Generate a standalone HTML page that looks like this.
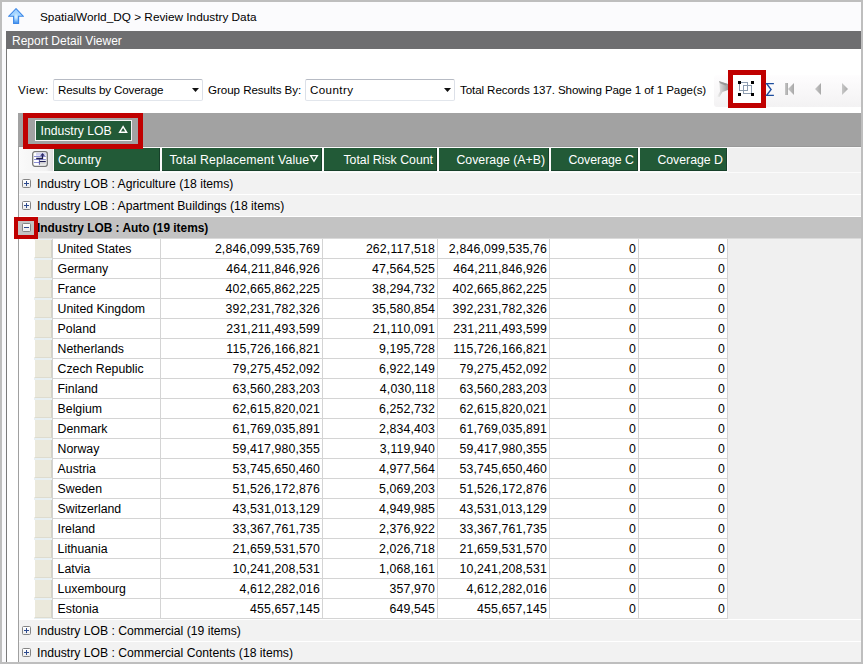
<!DOCTYPE html>
<html><head><meta charset="utf-8"><style>
*{margin:0;padding:0;box-sizing:content-box}
html,body{width:863px;height:664px;overflow:hidden;background:#fff;font-family:"Liberation Sans",sans-serif;font-size:12px;color:#000}
.a{position:absolute}
#frame{position:absolute;left:0;top:0;width:859px;height:660px;border:2px solid #bebebe;background:#fff}
#topbar{position:absolute;left:2px;top:2px;width:859px;height:29px;background:#fbfbfd}
#crumb{position:absolute;left:40px;top:10px;font-size:11.8px;line-height:14px;color:#000;white-space:nowrap}
#title{position:absolute;left:6px;top:31px;width:855px;height:18px;background:#6e6e70;color:#fff}
#title span{position:absolute;left:6px;top:2.5px;font-size:12px;line-height:14px;white-space:nowrap}
#vline{position:absolute;left:6px;top:49px;width:1px;height:613px;background:#7a7a7a}
.lbl{position:absolute;font-size:11.6px;white-space:nowrap;line-height:14px;color:#000}
.dd{position:absolute;top:79px;width:148px;height:20px;border:1px solid;border-color:#b7bbc4 #dce0e8 #e2e6ec #dce0e8;border-radius:2px;background:#fff}
.dd span{position:absolute;left:4px;top:3px;font-size:11.6px;line-height:14px;color:#000;white-space:nowrap}
.dd i{position:absolute;top:9px;width:0;height:0;border-left:3.5px solid transparent;border-right:3.5px solid transparent;border-top:4px solid #111}
#tb{position:absolute;left:714px;top:75px;width:147px;height:32px;background:linear-gradient(#fefdfe,#f3f2f3);border-radius:3px 0 0 3px}
.red{position:absolute;border:5px solid #c00000}
#gp{position:absolute;left:18px;top:113px;width:843px;height:34px;background:#a2a2a2;box-shadow:inset 0 -1px 0 #999}
#grid{position:absolute;left:18px;top:147px;width:843px;height:515px;background:#f0f0f0;border-left:1px solid #a0a0a0;box-sizing:border-box}
.hd{position:absolute;top:148px;height:22px;background:#225a37;border-right:1px solid #17402a;border-bottom:1px solid #17402a;color:#fff;line-height:24px;font-size:12.3px;white-space:nowrap;box-sizing:content-box}
.grp{position:absolute;left:19px;width:842px;height:21px;background:#f2f2f2;border-bottom:1px solid #fff}
.grp span{position:absolute;left:18px;top:0;line-height:23px;font-size:12.2px;white-space:nowrap;color:#000}
.pm{position:absolute;left:3px;top:6px;width:7px;height:7px;border:1px solid #858585;border-radius:1.5px;background:linear-gradient(#fff,#ececec)}
.c{position:absolute;height:19px;line-height:21px;font-size:12.3px;background:#fff;border-right:1px solid #d4d4d4;border-bottom:1px solid #d4d4d4;white-space:nowrap;overflow:hidden}
.tl{text-align:left}
.tl{padding-left:4.6px;width:102.4px!important;font-size:12.3px}
.tr{text-align:right;letter-spacing:0.15px;padding-right:2px}
.ind{position:absolute;left:34px;width:16px;border-left:1px solid #fff;height:17px;background:#ebe9dc;border-bottom:1px solid #dedccf;border-right:1px solid #d3d2c8}
.ph{position:absolute;left:1px;top:3px;width:5px;height:1px;background:#2d4a8e}
.pv{position:absolute;left:3px;top:1px;width:1px;height:5px;background:#2d4a8e}

</style></head><body>
<div id="frame"></div>
<div id="topbar"></div>
<svg class="a" style="left:8px;top:8px" width="16" height="16" viewBox="0 0 16 16">
<defs><linearGradient id="ag" x1="0" y1="0" x2="0" y2="1"><stop offset="0" stop-color="#9fd0ff"/><stop offset="0.5" stop-color="#a8d8ff"/><stop offset="1" stop-color="#4b98f0"/></linearGradient>
<radialGradient id="ah" cx="0.5" cy="0.45" r="0.5"><stop offset="0" stop-color="#f0faff" stop-opacity="0.95"/><stop offset="1" stop-color="#c0e4ff" stop-opacity="0"/></radialGradient></defs>
<path d="M8 0.7 L15.4 8.3 L10.6 8.3 L10.6 15.4 L5.6 15.4 L5.6 8.3 L0.6 8.3 Z" fill="url(#ag)" stroke="#3d88e8" stroke-width="1.1" stroke-linejoin="miter"/>
<ellipse cx="8" cy="9.5" rx="2.2" ry="5" fill="url(#ah)"/>
</svg>
<div id="crumb">SpatialWorld_DQ &gt; Review Industry Data</div>
<div id="title"><span>Report Detail Viewer</span></div>
<div class="a" style="left:2px;top:49px;width:4px;height:613px;background:#fafafc"></div>
<div id="vline"></div>
<div class="lbl" style="left:18px;top:83px;letter-spacing:0.5px">View:</div>
<div class="dd" style="left:53px"><span style="letter-spacing:-0.12px">Results by Coverage</span><svg class="a" style="left:137.5px;top:8px" width="7" height="4" viewBox="0 0 7 4"><path d="M0 0 H7 L3.5 4 Z" fill="#111"/></svg></div>
<div class="lbl" style="left:208px;top:83px;letter-spacing:-0.05px">Group Results By:</div>
<div class="dd" style="left:305px"><span style="letter-spacing:0.4px">Country</span><svg class="a" style="left:137.5px;top:8px" width="7" height="4" viewBox="0 0 7 4"><path d="M0 0 H7 L3.5 4 Z" fill="#111"/></svg></div>
<div class="lbl" style="left:460px;top:83px;letter-spacing:-0.1px">Total Records 137. Showing Page 1 of 1 Page(s)</div>
<div id="tb"></div>
<!-- filter funnel -->
<svg class="a" style="left:712px;top:76px" width="20" height="24" viewBox="0 0 20 24">
<defs><linearGradient id="fg" x1="0" y1="0" x2="1" y2="0"><stop offset="0" stop-color="#f4f4f4"/><stop offset="0.35" stop-color="#d2d2d2"/><stop offset="1" stop-color="#9c9c9c"/></linearGradient></defs>
<path d="M6.9 5 L16 8 L16 14 L10.5 16 L7.4 21 L5 20.6 L8 15.5 L7.4 7.5 Z" fill="url(#fg)"/>
<path d="M6.9 5 L15.5 8 L13.5 9.6 L8 7.2 Z" fill="#8e8e8e" opacity="0.8"/>
</svg>
<div class="red" style="left:728px;top:70px;width:28px;height:28px;background:#fff"></div>
<svg class="a" style="left:737px;top:80px" width="18" height="18" viewBox="0 0 18 18">
<rect x="2.5" y="2.5" width="8" height="8" fill="none" stroke="#8e9db0" stroke-width="1"/>
<rect x="6.5" y="5.5" width="8" height="8" fill="none" stroke="#8e9db0" stroke-width="1"/>
<rect x="1" y="1" width="3" height="3" fill="#000"/>
<rect x="14" y="1" width="3" height="3" fill="#000"/>
<rect x="1" y="13" width="3" height="3" fill="#000"/>
<rect x="14" y="13" width="3" height="3" fill="#000"/>
</svg>
<svg class="a" style="left:765px;top:82px" width="11" height="15" viewBox="0 0 11 15">
<path d="M8.9 1.6 L1.6 1.6 L6.1 7.5 L1.6 13.4 L8.9 13.4" fill="none" stroke="#1d4d9e" stroke-width="1.35"/>
</svg>
<svg class="a" style="left:784px;top:82px" width="12" height="14" viewBox="0 0 12 14">
<defs><linearGradient id="ng" x1="0" y1="0" x2="1" y2="0"><stop offset="0" stop-color="#c8c8c8"/><stop offset="1" stop-color="#a8a8a8"/></linearGradient></defs>
<rect x="1" y="1" width="3" height="12" fill="url(#ng)"/>
<path d="M10 1 L4 7 L10 13 Z" fill="url(#ng)"/>
</svg>
<svg class="a" style="left:814px;top:82px" width="8" height="14" viewBox="0 0 8 14">
<path d="M7 1 L1 7 L7 13 Z" fill="url(#ng)"/>
</svg>
<svg class="a" style="left:841px;top:82px" width="8" height="14" viewBox="0 0 8 14">
<path d="M1 1 L7 7 L1 13 Z" fill="url(#ng)"/>
</svg>
<div id="gp"></div>
<div id="grid"></div>
<div class="a" style="left:19px;top:147px;width:842px;height:1px;background:#fafafa"></div>
<div class="a" style="left:19px;top:148px;width:842px;height:24px;background:#f0f0f0"></div>
<div class="a" style="left:19px;top:148px;width:709px;height:24px;background:#fafafa"></div>
<div class="a" style="left:19px;top:172px;width:842px;height:1px;background:#fbfbfb"></div>
<!-- header indicator cell -->
<div class="a" style="left:19px;top:148px;width:34px;height:23px;background:linear-gradient(90deg,#fafafa,#f2f2f2 80%,#dedede)"></div>
<svg class="a" style="left:32px;top:151px" width="16" height="16" viewBox="0 0 16 16">
<rect x="0.7" y="0.7" width="14.6" height="14.6" rx="2.2" fill="#fff" stroke="#767676" stroke-width="1.3"/>
<rect x="4" y="1.8" width="9.8" height="2.9" fill="#d4d4f0"/>
<path d="M2 5.5 H13.8 M2 8.5 H13.8 M2 11.5 H7" stroke="#8d8fd6" stroke-width="1"/>
<rect x="8" y="11.2" width="5.8" height="2.4" fill="#d9d9d9"/>
<path d="M7.4 8 V13.8" stroke="#5555a5" stroke-width="1"/>
<path d="M4.2 7.5 H10.5 V4.2" fill="none" stroke="#1c1c4a" stroke-width="1.3"/>
<path d="M8.2 4.8 L10.5 2.1 L12.9 4.8 Z" fill="#262668"/>
<path d="M7.6 10.5 H13.8" stroke="#1f1f55" stroke-width="1.2"/>
</svg>
<div class="hd" style="left:54px;width:101px;padding-left:4px">Country</div>
<div class="hd" style="left:162px;width:156px;padding-right:3px;text-align:right;letter-spacing:0.18px">Total Replacement Value<span style="display:inline-block;width:8.6px"></span></div>
<svg class="a" style="left:309px;top:154px" width="10" height="9" viewBox="0 0 10 9"><path d="M1.6 1.6 H8.4 L5 7.3 Z" fill="none" stroke="#fff" stroke-width="1.35"/></svg>
<div class="hd" style="left:324px;width:109px;padding-right:3px;text-align:right">Total Risk Count</div>
<div class="hd" style="left:439px;width:106px;padding-right:3px;text-align:right">Coverage (A+B)</div>
<div class="hd" style="left:551px;width:83px;padding-right:3px;text-align:right">Coverage C</div>
<div class="hd" style="left:640px;width:83px;padding-right:3px;text-align:right">Coverage D</div>

<div class="a" style="left:19px;top:239px;width:15px;height:380px;background:#fff"></div>
<div class="a" style="left:34px;top:239px;width:18px;height:380px;background:#e8f0f3"></div>
<div class="a" style="left:52px;top:239px;width:1px;height:380px;background:#d2d2d2"></div>
<!-- group rows -->
<div class="grp" style="top:173px"><div class="pm"><b class="ph"></b><b class="pv"></b></div><span>Industry LOB : Agriculture (18 items)</span></div>
<div class="grp" style="top:195px"><div class="pm"><b class="ph"></b><b class="pv"></b></div><span>Industry LOB : Apartment Buildings (18 items)</span></div>
<div class="grp" style="top:217px;background:#c3c3c3;border-bottom-color:#dadada"><div class="pm"><b class="ph"></b><b class="pv"></b></div><span style="font-weight:bold;left:18px;font-size:11.9px">Industry LOB : Auto (19 items)</span></div>
<div class="a" style="left:19px;top:619px;width:842px;height:1px;background:#fff"></div>
<div class="grp" style="top:620px"><div class="pm"><b class="ph"></b><b class="pv"></b></div><span>Industry LOB : Commercial (19 items)</span></div>
<div class="grp" style="top:642px"><div class="pm"><b class="ph"></b><b class="pv"></b></div><span>Industry LOB : Commercial Contents (18 items)</span></div>
<!-- group panel button -->
<div class="red" style="left:23px;top:113px;width:110px;height:26px;background:#a2a2a2"></div>
<div class="a" style="left:35px;top:120px;width:95px;height:19px;border:1px solid #f4f4f4;background:#225a37;color:#fff">
<span class="a" style="left:4.5px;top:3px;line-height:15px;font-size:12.2px;white-space:nowrap">Industry LOB</span>
</div>
<svg class="a" style="left:118px;top:125px" width="10" height="9" viewBox="0 0 10 9"><path d="M1.6 7.3 H8.6 L5.1 1.6 Z" fill="none" stroke="#fff" stroke-width="1.4" stroke-linejoin="miter"/></svg>
<div class="red" style="left:14px;top:217px;width:16px;height:14px;border-width:4px;background:#c3c3c3"></div>
<div class="pm" style="left:22px;top:223px;position:absolute"><b class="ph"></b></div>

<div class="ind" style="top:240px"></div><div class="c tl" style="top:239px;left:53px;width:107px">United States</div><div class="c tr" style="top:239px;left:161px;width:159px">2,846,099,535,769</div><div class="c tr" style="top:239px;left:323px;width:112px">262,117,518</div><div class="c tr" style="top:239px;left:438px;width:109px">2,846,099,535,76</div><div class="c tr" style="top:239px;left:550px;width:86px">0</div><div class="c tr" style="top:239px;left:639px;width:86px">0</div><div class="ind" style="top:260px"></div><div class="c tl" style="top:259px;left:53px;width:107px">Germany</div><div class="c tr" style="top:259px;left:161px;width:159px">464,211,846,926</div><div class="c tr" style="top:259px;left:323px;width:112px">47,564,525</div><div class="c tr" style="top:259px;left:438px;width:109px">464,211,846,926</div><div class="c tr" style="top:259px;left:550px;width:86px">0</div><div class="c tr" style="top:259px;left:639px;width:86px">0</div><div class="ind" style="top:280px"></div><div class="c tl" style="top:279px;left:53px;width:107px">France</div><div class="c tr" style="top:279px;left:161px;width:159px">402,665,862,225</div><div class="c tr" style="top:279px;left:323px;width:112px">38,294,732</div><div class="c tr" style="top:279px;left:438px;width:109px">402,665,862,225</div><div class="c tr" style="top:279px;left:550px;width:86px">0</div><div class="c tr" style="top:279px;left:639px;width:86px">0</div><div class="ind" style="top:300px"></div><div class="c tl" style="top:299px;left:53px;width:107px">United Kingdom</div><div class="c tr" style="top:299px;left:161px;width:159px">392,231,782,326</div><div class="c tr" style="top:299px;left:323px;width:112px">35,580,854</div><div class="c tr" style="top:299px;left:438px;width:109px">392,231,782,326</div><div class="c tr" style="top:299px;left:550px;width:86px">0</div><div class="c tr" style="top:299px;left:639px;width:86px">0</div><div class="ind" style="top:320px"></div><div class="c tl" style="top:319px;left:53px;width:107px">Poland</div><div class="c tr" style="top:319px;left:161px;width:159px">231,211,493,599</div><div class="c tr" style="top:319px;left:323px;width:112px">21,110,091</div><div class="c tr" style="top:319px;left:438px;width:109px">231,211,493,599</div><div class="c tr" style="top:319px;left:550px;width:86px">0</div><div class="c tr" style="top:319px;left:639px;width:86px">0</div><div class="ind" style="top:340px"></div><div class="c tl" style="top:339px;left:53px;width:107px">Netherlands</div><div class="c tr" style="top:339px;left:161px;width:159px">115,726,166,821</div><div class="c tr" style="top:339px;left:323px;width:112px">9,195,728</div><div class="c tr" style="top:339px;left:438px;width:109px">115,726,166,821</div><div class="c tr" style="top:339px;left:550px;width:86px">0</div><div class="c tr" style="top:339px;left:639px;width:86px">0</div><div class="ind" style="top:360px"></div><div class="c tl" style="top:359px;left:53px;width:107px">Czech Republic</div><div class="c tr" style="top:359px;left:161px;width:159px">79,275,452,092</div><div class="c tr" style="top:359px;left:323px;width:112px">6,922,149</div><div class="c tr" style="top:359px;left:438px;width:109px">79,275,452,092</div><div class="c tr" style="top:359px;left:550px;width:86px">0</div><div class="c tr" style="top:359px;left:639px;width:86px">0</div><div class="ind" style="top:380px"></div><div class="c tl" style="top:379px;left:53px;width:107px">Finland</div><div class="c tr" style="top:379px;left:161px;width:159px">63,560,283,203</div><div class="c tr" style="top:379px;left:323px;width:112px">4,030,118</div><div class="c tr" style="top:379px;left:438px;width:109px">63,560,283,203</div><div class="c tr" style="top:379px;left:550px;width:86px">0</div><div class="c tr" style="top:379px;left:639px;width:86px">0</div><div class="ind" style="top:400px"></div><div class="c tl" style="top:399px;left:53px;width:107px">Belgium</div><div class="c tr" style="top:399px;left:161px;width:159px">62,615,820,021</div><div class="c tr" style="top:399px;left:323px;width:112px">6,252,732</div><div class="c tr" style="top:399px;left:438px;width:109px">62,615,820,021</div><div class="c tr" style="top:399px;left:550px;width:86px">0</div><div class="c tr" style="top:399px;left:639px;width:86px">0</div><div class="ind" style="top:420px"></div><div class="c tl" style="top:419px;left:53px;width:107px">Denmark</div><div class="c tr" style="top:419px;left:161px;width:159px">61,769,035,891</div><div class="c tr" style="top:419px;left:323px;width:112px">2,834,403</div><div class="c tr" style="top:419px;left:438px;width:109px">61,769,035,891</div><div class="c tr" style="top:419px;left:550px;width:86px">0</div><div class="c tr" style="top:419px;left:639px;width:86px">0</div><div class="ind" style="top:440px"></div><div class="c tl" style="top:439px;left:53px;width:107px">Norway</div><div class="c tr" style="top:439px;left:161px;width:159px">59,417,980,355</div><div class="c tr" style="top:439px;left:323px;width:112px">3,119,940</div><div class="c tr" style="top:439px;left:438px;width:109px">59,417,980,355</div><div class="c tr" style="top:439px;left:550px;width:86px">0</div><div class="c tr" style="top:439px;left:639px;width:86px">0</div><div class="ind" style="top:460px"></div><div class="c tl" style="top:459px;left:53px;width:107px">Austria</div><div class="c tr" style="top:459px;left:161px;width:159px">53,745,650,460</div><div class="c tr" style="top:459px;left:323px;width:112px">4,977,564</div><div class="c tr" style="top:459px;left:438px;width:109px">53,745,650,460</div><div class="c tr" style="top:459px;left:550px;width:86px">0</div><div class="c tr" style="top:459px;left:639px;width:86px">0</div><div class="ind" style="top:480px"></div><div class="c tl" style="top:479px;left:53px;width:107px">Sweden</div><div class="c tr" style="top:479px;left:161px;width:159px">51,526,172,876</div><div class="c tr" style="top:479px;left:323px;width:112px">5,069,203</div><div class="c tr" style="top:479px;left:438px;width:109px">51,526,172,876</div><div class="c tr" style="top:479px;left:550px;width:86px">0</div><div class="c tr" style="top:479px;left:639px;width:86px">0</div><div class="ind" style="top:500px"></div><div class="c tl" style="top:499px;left:53px;width:107px">Switzerland</div><div class="c tr" style="top:499px;left:161px;width:159px">43,531,013,129</div><div class="c tr" style="top:499px;left:323px;width:112px">4,949,985</div><div class="c tr" style="top:499px;left:438px;width:109px">43,531,013,129</div><div class="c tr" style="top:499px;left:550px;width:86px">0</div><div class="c tr" style="top:499px;left:639px;width:86px">0</div><div class="ind" style="top:520px"></div><div class="c tl" style="top:519px;left:53px;width:107px">Ireland</div><div class="c tr" style="top:519px;left:161px;width:159px">33,367,761,735</div><div class="c tr" style="top:519px;left:323px;width:112px">2,376,922</div><div class="c tr" style="top:519px;left:438px;width:109px">33,367,761,735</div><div class="c tr" style="top:519px;left:550px;width:86px">0</div><div class="c tr" style="top:519px;left:639px;width:86px">0</div><div class="ind" style="top:540px"></div><div class="c tl" style="top:539px;left:53px;width:107px">Lithuania</div><div class="c tr" style="top:539px;left:161px;width:159px">21,659,531,570</div><div class="c tr" style="top:539px;left:323px;width:112px">2,026,718</div><div class="c tr" style="top:539px;left:438px;width:109px">21,659,531,570</div><div class="c tr" style="top:539px;left:550px;width:86px">0</div><div class="c tr" style="top:539px;left:639px;width:86px">0</div><div class="ind" style="top:560px"></div><div class="c tl" style="top:559px;left:53px;width:107px">Latvia</div><div class="c tr" style="top:559px;left:161px;width:159px">10,241,208,531</div><div class="c tr" style="top:559px;left:323px;width:112px">1,068,161</div><div class="c tr" style="top:559px;left:438px;width:109px">10,241,208,531</div><div class="c tr" style="top:559px;left:550px;width:86px">0</div><div class="c tr" style="top:559px;left:639px;width:86px">0</div><div class="ind" style="top:580px"></div><div class="c tl" style="top:579px;left:53px;width:107px">Luxembourg</div><div class="c tr" style="top:579px;left:161px;width:159px">4,612,282,016</div><div class="c tr" style="top:579px;left:323px;width:112px">357,970</div><div class="c tr" style="top:579px;left:438px;width:109px">4,612,282,016</div><div class="c tr" style="top:579px;left:550px;width:86px">0</div><div class="c tr" style="top:579px;left:639px;width:86px">0</div><div class="ind" style="top:600px"></div><div class="c tl" style="top:599px;left:53px;width:107px">Estonia</div><div class="c tr" style="top:599px;left:161px;width:159px">455,657,145</div><div class="c tr" style="top:599px;left:323px;width:112px">649,545</div><div class="c tr" style="top:599px;left:438px;width:109px">455,657,145</div><div class="c tr" style="top:599px;left:550px;width:86px">0</div><div class="c tr" style="top:599px;left:639px;width:86px">0</div>
<div class="a" style="left:0;top:0;width:859px;height:660px;border:2px solid #bebebe;z-index:5"></div>
</body></html>
